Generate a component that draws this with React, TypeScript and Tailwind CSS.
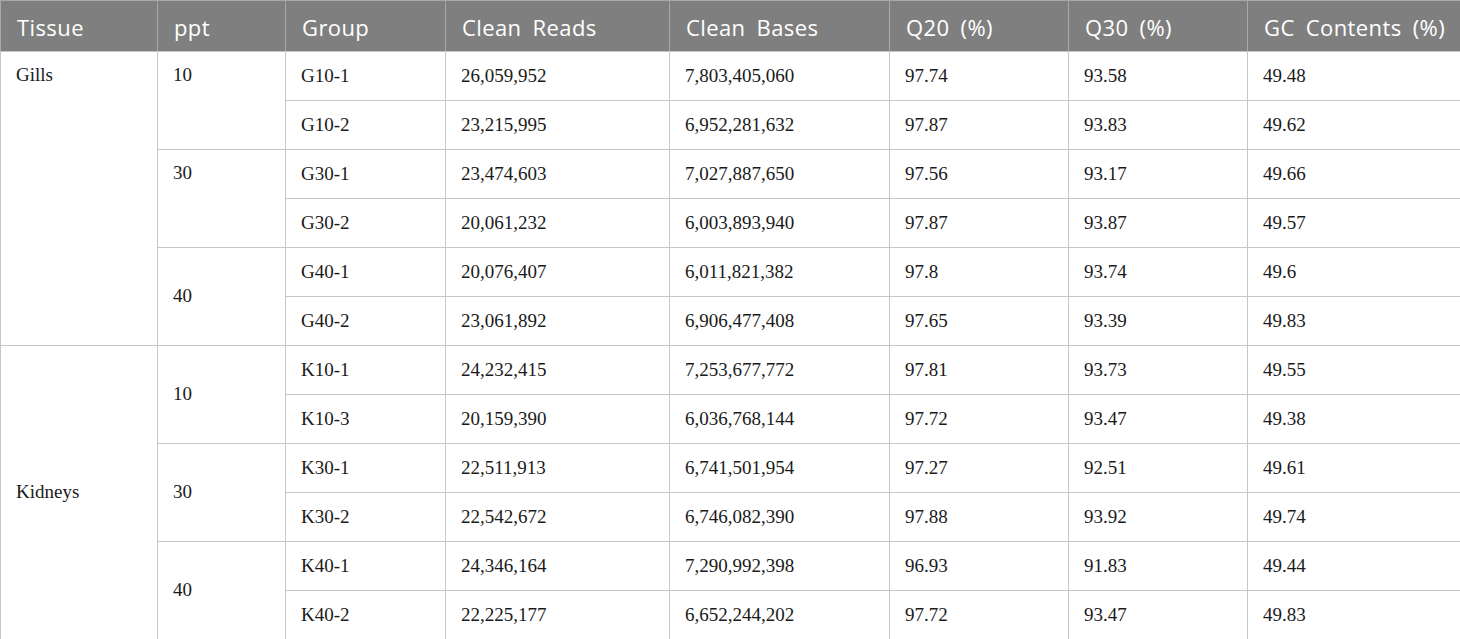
const headers = ["Tissue", "ppt", "Group", "Clean Reads", "Clean Bases", "Q20 (%)", "Q30 (%)", "GC Contents (%)"];
const widths = ["w-[157px]", "w-[128px]", "w-[160px]", "w-[224px]", "w-[220px]", "w-[179px]", "w-[179px]", "w-[213px]"];

type Span = { text: string; span: number; align: "top" | "middle" };

type Row = {
  tissue?: Span;
  ppt?: Span;
  group: string;
  reads: string;
  bases: string;
  q20: string;
  q30: string;
  gc: string;
};

const rows: Row[] = [
  { tissue: { text: "Gills", span: 6, align: "top" }, ppt: { text: "10", span: 2, align: "top" }, group: "G10-1", reads: "26,059,952", bases: "7,803,405,060", q20: "97.74", q30: "93.58", gc: "49.48" },
  { group: "G10-2", reads: "23,215,995", bases: "6,952,281,632", q20: "97.87", q30: "93.83", gc: "49.62" },
  { ppt: { text: "30", span: 2, align: "top" }, group: "G30-1", reads: "23,474,603", bases: "7,027,887,650", q20: "97.56", q30: "93.17", gc: "49.66" },
  { group: "G30-2", reads: "20,061,232", bases: "6,003,893,940", q20: "97.87", q30: "93.87", gc: "49.57" },
  { ppt: { text: "40", span: 2, align: "middle" }, group: "G40-1", reads: "20,076,407", bases: "6,011,821,382", q20: "97.8", q30: "93.74", gc: "49.6" },
  { group: "G40-2", reads: "23,061,892", bases: "6,906,477,408", q20: "97.65", q30: "93.39", gc: "49.83" },
  { tissue: { text: "Kidneys", span: 6, align: "middle" }, ppt: { text: "10", span: 2, align: "middle" }, group: "K10-1", reads: "24,232,415", bases: "7,253,677,772", q20: "97.81", q30: "93.73", gc: "49.55" },
  { group: "K10-3", reads: "20,159,390", bases: "6,036,768,144", q20: "97.72", q30: "93.47", gc: "49.38" },
  { ppt: { text: "30", span: 2, align: "middle" }, group: "K30-1", reads: "22,511,913", bases: "6,741,501,954", q20: "97.27", q30: "92.51", gc: "49.61" },
  { group: "K30-2", reads: "22,542,672", bases: "6,746,082,390", q20: "97.88", q30: "93.92", gc: "49.74" },
  { ppt: { text: "40", span: 2, align: "middle" }, group: "K40-1", reads: "24,346,164", bases: "7,290,992,398", q20: "96.93", q30: "91.83", gc: "49.44" },
  { group: "K40-2", reads: "22,225,177", bases: "6,652,244,202", q20: "97.72", q30: "93.47", gc: "49.83" },
];

const cell = "border border-[#c6c6c6] pl-[15px] pr-2 text-left";

export default function App() {
  return (
    <div className="w-[1460px] h-[639px] bg-white overflow-hidden">
      <table className="table-fixed border-collapse w-[1460px] font-['Liberation_Serif',serif] text-[19px] text-[#1a1a1a]">
        <colgroup>
          {widths.map((w, i) => (
            <col key={i} className={w} />
          ))}
        </colgroup>
        <thead>
          <tr className="h-[51px] bg-[#7f7f7f]">
            {headers.map((h) => (
              <th
                key={h}
                className="border border-[#a9a9a9] border-b-[#c6c6c6] pl-[16px] pr-1 pt-[3px] text-left align-middle font-normal text-white text-[22px] tracking-[0.4px] [word-spacing:5px] font-['Open_Sans',sans-serif] whitespace-nowrap"
              >
                {h}
              </th>
            ))}
          </tr>
        </thead>
        <tbody>
          {rows.map((r) => (
            <tr key={r.group} className="h-[49px]">
              {r.tissue && (
                <td
                  rowSpan={r.tissue.span}
                  className={`${cell} ${r.tissue.align === "top" ? "align-top pt-[9px]" : "align-middle"}`}
                >
                  {r.tissue.text}
                </td>
              )}
              {r.ppt && (
                <td
                  rowSpan={r.ppt.span}
                  className={`${cell} ${r.ppt.align === "top" ? "align-top pt-[9px]" : "align-middle"}`}
                >
                  {r.ppt.text}
                </td>
              )}
              <td className={cell}>{r.group}</td>
              <td className={cell}>{r.reads}</td>
              <td className={cell}>{r.bases}</td>
              <td className={cell}>{r.q20}</td>
              <td className={cell}>{r.q30}</td>
              <td className={cell}>{r.gc}</td>
            </tr>
          ))}
        </tbody>
      </table>
    </div>
  );
}
